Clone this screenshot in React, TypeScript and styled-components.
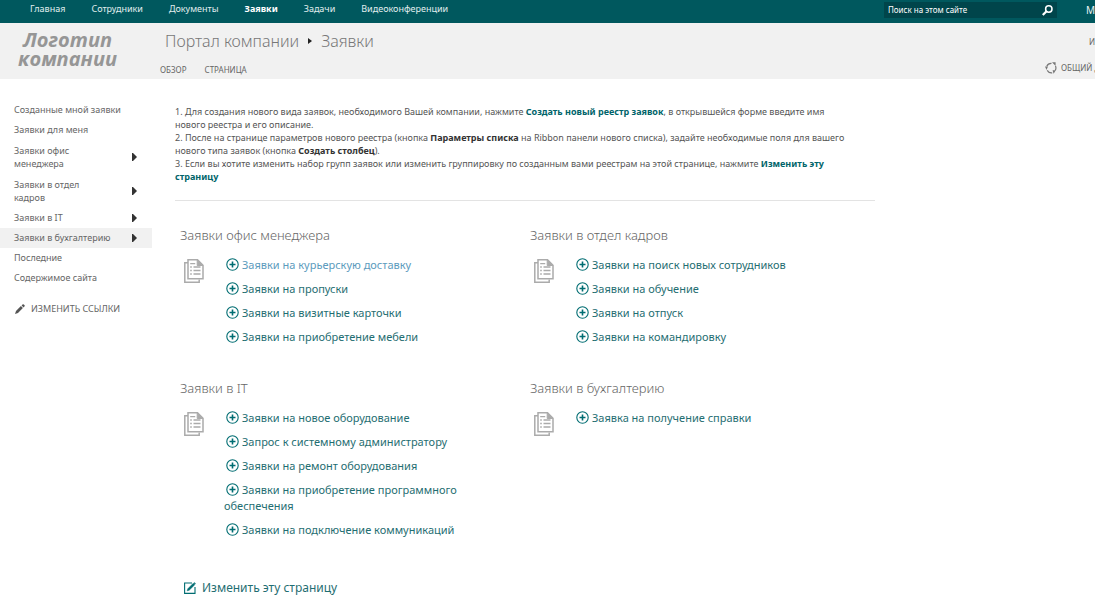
import React from "react";
import styled, { createGlobalStyle } from "styled-components";

const Global = createGlobalStyle`
  * { box-sizing: border-box; }
  body { margin: 0; background: #fff; color: #555; font: 9px/13px "Noto Sans", sans-serif; overflow-x: hidden; }
  a { text-decoration: none; }
  ul { list-style: none; margin: 0; padding: 0; }
`;

const TopBar = styled.header`
  display: flex;
  justify-content: space-between;
  height: 23px;
  background: #00585e;
  color: #e8f3f3;
`;
const TopNav = styled.nav`
  display: flex;
  gap: 26px;
  padding: 2px 0 0 30px;
`;
const TopLink = styled.a<{ $active?: boolean }>`
  color: ${(p) => (p.$active ? "#fff" : "#e0eeee")};
  font-weight: ${(p) => (p.$active ? 700 : 400)};
`;
const TopRight = styled.div`
  display: flex;
  gap: 29px;
  padding-top: 2px;
  white-space: nowrap;
`;
const Search = styled.form`
  display: flex;
  align-items: center;
  width: 173px;
  height: 16px;
  padding: 0 4px;
  background: #00454b;
`;
const SearchInput = styled.input`
  flex: 1;
  min-width: 0;
  padding: 0;
  border: 0;
  outline: 0;
  background: transparent;
  color: #fff;
  font: 8px/14px "Noto Sans", sans-serif;
  &::placeholder { color: #fff; opacity: 1; }
`;
const PlainButton = styled.button`
  display: flex;
  align-items: center;
  gap: 4px;
  padding: 0;
  border: 0;
  background: transparent;
  color: inherit;
  font: inherit;
  white-space: nowrap;
`;
const UserButton = styled(PlainButton)`
  height: 17px;
  font-size: 10px;
`;

const TitleBar = styled.div`
  display: flex;
  height: 56px;
  background: #f1f1f1;
`;
const Logo = styled.a`
  width: 135px;
  margin-right: 25px;
  padding-top: 7px;
  color: #969696;
  font: italic 700 20px/19px "Open Sans", "Noto Sans", sans-serif;
  text-align: center;
`;
const TitleArea = styled.div`
  flex: 1;
  padding-top: 6px;
`;
const Title = styled.h1`
  display: flex;
  align-items: center;
  gap: 9px;
  margin: 0 0 10px 5px;
  color: #777;
  font-size: 16px;
  font-weight: 300;
  line-height: 24px;
  a { color: inherit; }
`;
const Tabs = styled.nav`
  display: flex;
  gap: 18px;
`;
const Tab = styled.a`
  color: #666;
  font-size: 8px;
`;
const Actions = styled.div`
  display: flex;
  flex-direction: column;
  align-items: flex-end;
  gap: 13px;
  width: 50px;
  padding-top: 12px;
  color: #666;
  font-size: 8px;
`;
const ShareButton = styled(PlainButton)`
  align-self: flex-start;
`;

const Body = styled.div`
  display: flex;
`;
const Sidebar = styled.nav`
  flex: 0 0 152px;
  padding-top: 21px;
`;
const SideLink = styled.a<{ $current?: boolean }>`
  display: flex;
  align-items: center;
  justify-content: space-between;
  padding: 4px 15px 4px 14px;
  line-height: 12px;
  color: #666;
  background: ${(p) => (p.$current ? "#f1f1f1" : "transparent")};
`;
const SideText = styled.span<{ $narrow?: boolean }>`
  width: ${(p) => (p.$narrow ? "80px" : "auto")};
  line-height: ${(p) => (p.$narrow ? "13px" : "inherit")};
  white-space: ${(p) => (p.$narrow ? "normal" : "nowrap")};
`;
const EditLinks = styled(PlainButton)`
  gap: 6px;
  margin: 14px 0 0 15px;
  color: #666;
`;

const Main = styled.main`
  flex: 1;
  max-width: 723px;
  padding: 26px 0 0 23px;
`;
const Intro = styled.section`
  padding-bottom: 17px;
  border-bottom: 1px solid #e3e3e3;
  p { margin: 0; max-width: 676px; }
  strong { color: #333; }
  a { color: #00646a; font-weight: 700; }
`;
const Groups = styled.div`
  display: grid;
  grid-template-columns: 1fr 1fr;
  row-gap: 33px;
  padding-top: 24px;
`;
const GroupTitle = styled.h2`
  margin: 0 0 12px 5px;
  color: #666;
  font-size: 13px;
  font-weight: 300;
  line-height: 20px;
`;
const GroupBody = styled.div`
  display: flex;
  gap: 20px;
  padding-left: 9px;
  > svg { flex: none; margin-top: 2px; }
`;
const RequestList = styled.ul`
  display: flex;
  flex-direction: column;
  gap: 8px;
  max-width: 250px;
  font-size: 11px;
  line-height: 16px;
`;
const RequestLink = styled.a<{ $hover?: boolean }>`
  color: ${(p) => (p.$hover ? "#5c9bbd" : "#1f6e72")};
  svg { margin: 0 3px 0 2px; vertical-align: -2px; }
`;
const EditPage = styled.a`
  display: flex;
  align-items: center;
  gap: 6px;
  width: fit-content;
  margin: 40px 0 0 9px;
  color: #1f6e72;
  font-size: 12px;
  line-height: 20px;
`;

const Plus = () => (
  <svg width="13" height="13" viewBox="0 0 13 13" fill="none" stroke="#006d72">
    <circle cx="6.5" cy="6.5" r="5.7" strokeWidth="1.1" />
    <path d="M6.5 3.5v6M3.5 6.5h6" strokeWidth="1.6" />
  </svg>
);
const Pages = () => (
  <svg width="20" height="24" viewBox="0 0 20 24" fill="none" stroke="#ababab" strokeWidth="1.5">
    <path d="M4 3.7H.8v19.5h14.4v-2.7" />
    <path d="M13.5.8H4v19h15V6.3z" />
    <path d="M13.2 1v5.5h5.6z" fill="#ababab" strokeWidth="1" />
    <path d="M6.2 8h1.6M6.2 11.5h1.6M6.2 15h1.6M9.5 8h7M9.5 11.5h7M9.5 15h7M6.2 4.6h5" strokeWidth="1.3" />
  </svg>
);
const Arrow = () => (
  <svg width="5" height="8" viewBox="0 0 5 8">
    <path d="M0 0h1l4 4-4 4H0z" fill="#333" />
  </svg>
);
const Magnifier = () => (
  <svg width="11" height="11" viewBox="0 0 11 11" fill="none" stroke="#fff">
    <circle cx="6.8" cy="4" r="3.2" strokeWidth="1.5" />
    <path d="M4.5 6.3L.8 10" strokeWidth="2.2" />
  </svg>
);
const Share = () => (
  <svg width="12" height="12" viewBox="0 0 12 12" fill="none" stroke="#777" strokeWidth="1.2">
    <path d="M1.8 4.2A4.8 4.8 0 0 1 6.5 1.3M10.5 4a5 5 0 0 1-.2 4.4M7.2 10.8a5 5 0 0 1-5-2.4" />
    <path d="M7 .3h3.6V4zM7.6 8.2h3.2L8.6 11.8zM0 4.6h3L1.5 8z" fill="#777" stroke="none" />
  </svg>
);
const Pencil = () => (
  <svg width="10" height="10" viewBox="0 0 10 10" fill="#555">
    <path d="M0 10l1-3 4.9-4.9 2 2L3 9zM6.6 1.4L7.8.3Q8.3 0 8.8.4l.8.8q.4.5 0 1l-1 1.2z" />
  </svg>
);
const EditBox = () => (
  <svg width="12" height="12" viewBox="0 0 12 12" fill="none" stroke="#006d72">
    <path d="M8 1H.6v10.4H11V5" strokeWidth="1.1" />
    <path d="M3.2 8.8l.6-2L9.3 1.2l1.5 1.5L5.2 8.2z" fill="#006d72" strokeWidth=".5" />
    <path d="M10 .6L11.4 2" strokeWidth="1.1" />
  </svg>
);

const topLinks = ["Главная", "Сотрудники", "Документы", "Заявки", "Задачи", "Видеоконференции"];

const sideLinks = [
  { text: "Созданные мной заявки" },
  { text: "Заявки для меня" },
  { text: "Заявки офис менеджера", sub: true, narrow: true },
  { text: "Заявки в отдел кадров", sub: true, narrow: true },
  { text: "Заявки в IT", sub: true },
  { text: "Заявки в бухгалтерию", sub: true, current: true },
  { text: "Последние" },
  { text: "Содержимое сайта" },
];

const groups = [
  {
    title: "Заявки офис менеджера",
    items: ["Заявки на курьерскую доставку", "Заявки на пропуски", "Заявки на визитные карточки", "Заявки на приобретение мебели"],
  },
  {
    title: "Заявки в отдел кадров",
    items: ["Заявки на поиск новых сотрудников", "Заявки на обучение", "Заявки на отпуск", "Заявки на командировку"],
  },
  {
    title: "Заявки в IT",
    items: [
      "Заявки на новое оборудование",
      "Запрос к системному администратору",
      "Заявки на ремонт оборудования",
      "Заявки на приобретение программного обеспечения",
      "Заявки на подключение коммуникаций",
    ],
  },
  { title: "Заявки в бухгалтерию", items: ["Заявка на получение справки"] },
];

export default function App() {
  return (
    <>
      <Global />
      <TopBar>
        <TopNav>
          {topLinks.map((t) => (
            <TopLink key={t} href="#" $active={t === "Заявки"}>{t}</TopLink>
          ))}
        </TopNav>
        <TopRight>
          <Search>
            <SearchInput type="text" aria-label="Поиск на этом сайте" placeholder="Поиск на этом сайте" />
            <PlainButton type="button" aria-label="Найти"><Magnifier /></PlainButton>
          </Search>
          <UserButton>М</UserButton>
        </TopRight>
      </TopBar>
      <TitleBar>
        <Logo href="#">Логотип компании</Logo>
        <TitleArea>
          <Title>
            <a href="#">Портал компании</a>
            <svg width="4" height="6" viewBox="0 0 4 6"><path d="M0 0l4 3-4 3z" fill="#222" /></svg>
            <span>Заявки</span>
          </Title>
          <Tabs>
            <Tab href="#">ОБЗОР</Tab>
            <Tab href="#">СТРАНИЦА</Tab>
          </Tabs>
        </TitleArea>
        <Actions>
          <PlainButton>И</PlainButton>
          <ShareButton><Share />ОБЩИЙ Д</ShareButton>
        </Actions>
      </TitleBar>
      <Body>
        <Sidebar>
          <ul>
            {sideLinks.map((l) => (
              <li key={l.text}>
                <SideLink href="#" $current={l.current}>
                  <SideText $narrow={l.narrow}>{l.text}</SideText>
                  {l.sub && <Arrow />}
                </SideLink>
              </li>
            ))}
          </ul>
          <EditLinks><Pencil />ИЗМЕНИТЬ ССЫЛКИ</EditLinks>
        </Sidebar>
        <Main>
          <Intro>
            <p>1. Для создания нового вида заявок, необходимого Вашей компании, нажмите <a href="#">Создать новый реестр заявок</a>, в открывшейся форме введите имя нового реестра и его описание.</p>
            <p>2. После на странице параметров нового реестра (кнопка <strong>Параметры списка</strong> на Ribbon панели нового списка), задайте необходимые поля для вашего нового типа заявок (кнопка <strong>Создать столбец</strong>).</p>
            <p>3. Если вы хотите изменить набор групп заявок или изменить группировку по созданным вами реестрам на этой странице, нажмите <a href="#">Изменить эту страницу</a></p>
          </Intro>
          <Groups>
            {groups.map((g, gi) => (
              <section key={g.title}>
                <GroupTitle>{g.title}</GroupTitle>
                <GroupBody>
                  <Pages />
                  <RequestList>
                    {g.items.map((t, i) => (
                      <li key={t}>
                        <RequestLink href="#" $hover={gi === 0 && i === 0}><Plus />{t}</RequestLink>
                      </li>
                    ))}
                  </RequestList>
                </GroupBody>
              </section>
            ))}
          </Groups>
          <EditPage href="#"><EditBox />Изменить эту страницу</EditPage>
        </Main>
      </Body>
    </>
  );
}
